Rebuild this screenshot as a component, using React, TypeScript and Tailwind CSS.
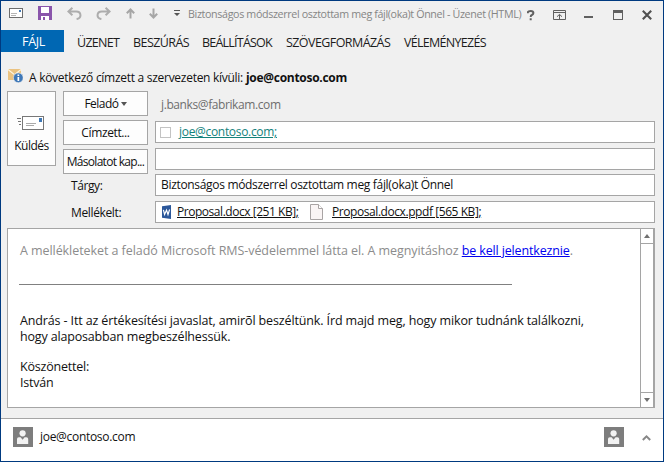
import type { ReactNode } from "react";

function MailIcon() {
  return (
    <svg className="mt-[7px] ml-2 h-[11px] w-[15px] shrink-0" viewBox="0 0 15 11" shapeRendering="crispEdges">
      <path d="M.5.5h13v9H.5z" fill="#fff" stroke="#6d6d6d" />
      <path d="M2 5.5h6M2 7.5h5" stroke="#b5b5b5" />
      <path d="M10 2h2v2h-2z" fill="#3f78b5" />
    </svg>
  );
}

function SaveIcon() {
  return (
    <svg className="mt-[5px] ml-[14px] h-[14px] w-[14px] shrink-0" viewBox="0 0 14 14" shapeRendering="crispEdges">
      <path d="M0 0h14v14H0z" fill="#8a55ab" />
      <path d="M3 1h8v6H3zM3 10h8v4H3z" fill="#fff" />
      <path d="M5 11h2v3H5z" fill="#8a55ab" />
    </svg>
  );
}

function UndoIcon({ className }: { className: string }) {
  return (
    <svg className={className} viewBox="0 0 15 13" fill="none" stroke="#adadad" strokeWidth="2">
      <path d="M5.4.8 1.4 4.5l4 3.7M1.8 4.5h7.4c5.4 0 5.8 6.8.4 7.6" />
    </svg>
  );
}

function ArrowIcon({ className }: { className: string }) {
  return (
    <svg className={className} viewBox="0 0 9 11" fill="none" stroke="#a6a6a6" strokeWidth="2">
      <path d="M4.5 10.5V1.5M.8 5.2l3.7-3.7 3.7 3.7" />
    </svg>
  );
}

function TitleBar() {
  return (
    <div className="flex h-[29px] items-start">
      <MailIcon />
      <SaveIcon />
      <UndoIcon className="mt-[6px] ml-[15px] h-[13px] w-[15px] shrink-0" />
      <UndoIcon className="mt-[6px] ml-[14px] h-[13px] w-[15px] shrink-0 -scale-x-100" />
      <ArrowIcon className="mt-[7px] ml-[15px] h-[11px] w-[9px] shrink-0" />
      <ArrowIcon className="mt-[7px] ml-[14px] h-[11px] w-[9px] shrink-0 rotate-180" />
      <svg className="mt-[9px] ml-[16px] h-[7px] w-[7px] shrink-0" viewBox="0 0 7 7" fill="#555">
        <path d="M0 0h6v1H0zM0 3h6L3 6z" />
      </svg>
      <span className="mt-[5px] ml-[7px] w-[336px] shrink-0 text-[11.5px] leading-4 whitespace-nowrap text-[#858585]">
        <span className="inline-block origin-left scale-x-[0.93] tracking-[-0.38px]">
          Biztonságos módszerrel osztottam meg fájl(oka)t Önnel - Üzenet (HTML)
        </span>
      </span>
      <svg className="mt-[9px] ml-[3px] h-[11px] w-[8px] shrink-0" viewBox="0 0 8 11" fill="none" stroke="#606060" strokeWidth="2">
        <path d="M.8 3.2V2.2Q1.2 1 3.6 1 6.4 1 6.4 3 6.4 4.3 4.8 5 3.7 5.4 3.7 7M3.7 8.2v2" />
      </svg>
      <svg className="mt-[9px] ml-[18px] h-[10px] w-[13px] shrink-0" viewBox="0 0 13 10" fill="none" stroke="#606060">
        <path d="M.5.5h12v9H.5zM1 2.5h11M6.5 9V4.5M4 6.7l2.5-2.3L9 6.7" />
      </svg>
      <span className="mt-[15px] ml-[18px] h-[2px] w-[9px] shrink-0 bg-[#606060]" />
      <span className="mt-[9px] ml-[20px] h-[10px] w-[10px] shrink-0 border border-t-[3px] border-[#606060]" />
      <svg className="mt-[9px] ml-[19px] h-[10px] w-[10px] shrink-0" viewBox="0 0 10 10" stroke="#505050" strokeWidth="2.1">
        <path d="m.8.8 8.4 8.4M9.2.8.8 9.2" />
      </svg>
    </div>
  );
}

function MenuBar() {
  return (
    <div className="flex h-[22px] text-[12.5px] leading-[25px] whitespace-nowrap text-[#1c1c1c]">
      <span className="w-[63px] bg-[#0067b3] pl-[21px] leading-[23px] tracking-[-0.3px] text-white">FÁJL</span>
      <span className="ml-[13px] w-[56px] tracking-[-0.72px]">ÜZENET</span>
      <span className="w-[69px] tracking-[-0.57px]">BESZÚRÁS</span>
      <span className="w-[84px] tracking-[-0.78px]">BEÁLLÍTÁSOK</span>
      <span className="w-[118px] tracking-[-0.57px]">SZÖVEGFORMÁZÁS</span>
      <span className="tracking-[-0.7px]">VÉLEMÉNYEZÉS</span>
    </div>
  );
}

function InfoBar() {
  return (
    <div className="mt-[16px] flex h-[18px] pl-[7px] leading-[19px] whitespace-nowrap">
      <svg className="mt-px mr-[6px] h-[15px] w-[15px] shrink-0" viewBox="0 0 15 15">
        <path d="M0 0h13v11H0z" fill="#ebc381" />
        <path d="m0 .5 6.5 5.2L13 .5" fill="none" stroke="#fff5df" strokeWidth="1.1" />
        <circle cx="10.3" cy="8.8" r="4.9" fill="#3f78b8" stroke="#f0f0f0" strokeWidth=".6" />
        <path d="M9.5 5.5h1.7v1.6H9.5zM9.5 8h1.7v3.9H9.5z" fill="#fff" />
      </svg>
      <span className="w-[217px] tracking-[-0.28px]">A következő címzett a szervezeten kívüli:</span>
      <b className="tracking-[-0.29px]">joe@contoso.com</b>
    </div>
  );
}

function Button({ children }: { children: ReactNode }) {
  return (
    <button className="flex h-[25px] w-[85px] items-center justify-center border border-[#a5a5a5] bg-[#fdfdfd] pt-px whitespace-nowrap">
      {children}
    </button>
  );
}

function Field({ children }: { children?: ReactNode }) {
  return (
    <div className="flex h-[22px] w-[500px] items-center border border-[#a5a5a5] bg-white whitespace-nowrap">{children}</div>
  );
}

function Header() {
  return (
    <div className="mt-[5px] ml-[6px] flex">
      <button className="flex h-[75px] w-[49px] flex-col items-center border border-[#a5a5a5] bg-[#fdfdfd]">
        <svg className="mt-[24px] mr-[2px] h-[14px] w-[27px]" viewBox="0 0 27 14" shapeRendering="crispEdges">
          <path d="M5.5.5h21v13h-21z" fill="#fff" stroke="#777" />
          <path d="M9 7.5h10M9 9.5h8" stroke="#aaa" />
          <path d="M22 2h3v4h-3z" fill="#3f78b5" />
          <path d="M0 2.5h4M1 5.5h3M2 8.5h2" stroke="#777" />
        </svg>
        <span className="mt-[7px] leading-[18px] tracking-[-0.5px]">Küldés</span>
      </button>
      <div className="ml-[7px] flex w-[85px] flex-col gap-[4px]">
        <Button>
          <span className="tracking-[-0.5px]">Feladó</span>
          <svg className="ml-[2px] h-[4px] w-[6px]" viewBox="0 0 6 4" fill="#555">
            <path d="M0 0h6L3 4z" />
          </svg>
        </Button>
        <Button>
          <span className="tracking-[-0.38px]">Címzett...</span>
        </Button>
        <Button>
          <span className="tracking-[-0.7px]">Másolatot kap...</span>
        </Button>
        <span className="pl-[8px] leading-[16px] tracking-[-0.4px]">Tárgy:</span>
        <span className="mt-[6px] pl-[8px] leading-[18px] tracking-[-0.36px]">Mellékelt:</span>
      </div>
      <div className="ml-[7px] flex flex-col">
        <span className="h-[30px] pl-[6px] leading-[27px] tracking-[-0.4px] text-[#6e6e6e]">j.banks@fabrikam.com</span>
        <Field>
          <span className="ml-[4px] h-[11px] w-[11px] border border-[#c3c3c3]" />
          <span className="ml-[8px] tracking-[-0.31px] text-[#14827c] underline">joe@contoso.com;</span>
        </Field>
        <div className="h-[5px]" />
        <Field />
        <div className="h-[4px]" />
        <Field>
          <span className="ml-[5px] tracking-[-0.32px]">Biztonságos módszerrel osztottam meg fájl(oka)t Önnel</span>
        </Field>
        <div className="h-[5px]" />
        <Field>
          <svg className="ml-[6px] h-[14px] w-[9px]" viewBox="0 0 9 14">
            <path d="m0 1.3 9-1.3v14l-9-1.3z" fill="#2b579a" />
            <path d="m1.4 4.8 1.2 4.7 1.9-4.4 1.5 4.4 1.6-5" fill="none" stroke="#fff" strokeWidth="1.2" />
          </svg>
          <span className="ml-[6px] w-[133px] tracking-[-0.46px] underline">Proposal.docx [251 KB];</span>
          <svg className="h-[16px] w-[13px]" viewBox="0 0 13 16">
            <path d="M.5.5h8l4 4v11H.5z" fill="#faf5f5" stroke="#a9a4a4" />
            <path d="M8.5.5v4h4" fill="#fff" stroke="#a9a4a4" />
          </svg>
          <span className="ml-[9px] tracking-[-0.43px] underline">Proposal.docx.ppdf [565 KB];</span>
        </Field>
      </div>
    </div>
  );
}

function Message() {
  return (
    <div className="mt-[5px] ml-[6px] flex h-[180px] w-[648px] border border-r-2 border-[#a5a5a5] bg-white">
      <div className="flex-1 pt-[14px] pl-[12px] text-[12.5px] leading-[16px] whitespace-nowrap">
        <p className="tracking-[-0.065px] text-[#8c8c8c]">
          A mellékleteket a feladó Microsoft RMS-védelemmel látta el. A megnyitáshoz{" "}
          <a className="tracking-[-0.14px] text-[#0000f0] underline">be kell jelentkeznie</a>.
        </p>
        <hr className="mt-[25px] ml-[-1px] w-[493px] border-[#808080]" />
        <p className="mt-[28px] tracking-[-0.13px]">
          András - Itt az értékesítési javaslat, amirõl beszéltünk. Írd majd meg, hogy mikor tudnánk találkozni,
        </p>
        <p className="tracking-[-0.17px]">hogy alaposabban megbeszélhessük.</p>
        <p className="mt-[14px] tracking-[-0.2px]">Köszönettel:</p>
        <p className="tracking-[-0.2px]">István</p>
      </div>
      <div className="flex w-[13px] flex-col justify-between border-l border-[#a5a5a5]">
        <span className="flex h-[15px] items-center justify-center border-b border-[#a5a5a5]">
          <svg className="h-[4px] w-[6px]" viewBox="0 0 6 4" fill="#707070">
            <path d="M0 4h6L3 0z" />
          </svg>
        </span>
        <span className="flex h-[15px] items-center justify-center border-t border-[#a5a5a5]">
          <svg className="h-[4px] w-[6px]" viewBox="0 0 6 4" fill="#707070">
            <path d="M0 0h6L3 4z" />
          </svg>
        </span>
      </div>
    </div>
  );
}

function Avatar() {
  return (
    <svg className="h-[20px] w-[20px] shrink-0" viewBox="0 0 20 20">
      <path d="M0 0h20v20H0z" fill="#7d7d7d" />
      <circle cx="9.6" cy="6.3" r="3.1" fill="#f2f2f2" />
      <path d="M4 17v-5q0-1.800 1.800-1.800h1.800l2 2.600 2-2.600h1.800q1.800 0 1.800 1.800v5z" fill="#f2f2f2" />
    </svg>
  );
}

function Footer() {
  return (
    <div className="mt-[10px] flex h-[43px] border-t border-[#a5a5a5] bg-white pt-[8px] pl-[12px]">
      <Avatar />
      <span className="ml-[7px] w-[564px] leading-[20px] tracking-[-0.3px]">joe@contoso.com</span>
      <Avatar />
      <svg className="mt-[8px] ml-[18px] h-[6px] w-[9px]" viewBox="0 0 9 6" fill="none" stroke="#888" strokeWidth="2">
        <path d="m.8 5 3.7-3.6L8.2 5" />
      </svg>
    </div>
  );
}

export default function App() {
  return (
    <div className="h-[462px] w-[664px] overflow-hidden border border-[#003a80] bg-[#f0f0f0] font-['Open_Sans','Noto_Sans',sans-serif] text-[12px] text-[#111]">
      <TitleBar />
      <MenuBar />
      <InfoBar />
      <Header />
      <Message />
      <Footer />
    </div>
  );
}
